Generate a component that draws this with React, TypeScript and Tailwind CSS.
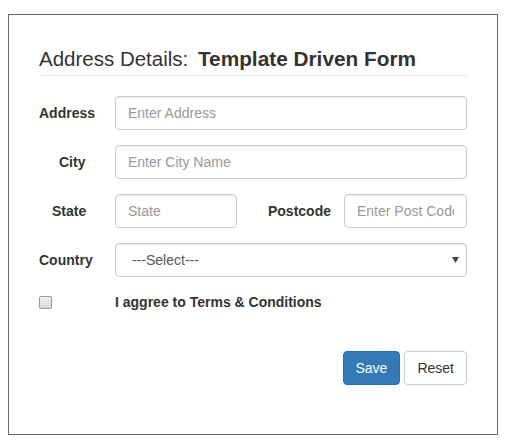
import React from "react";

const inputCls =
  "h-[34px] rounded-[4px] border border-[#cccccc] bg-white px-[12px] text-[14px] text-[#555555] outline-none placeholder:text-[#999999] shadow-[inset_0_1px_1px_rgba(0,0,0,0.075)]";

const App = () => {
  return (
    <div
      className="bg-white min-h-[448px] pl-[8px] pt-[14px]"
      style={{ fontFamily: '"Liberation Sans", Arial, sans-serif' }}
    >
      <div className="w-[490px] h-[421px] border border-[#666666] px-[30px] pt-[33px] text-[#333333]">
        {/* Heading */}
        <h3 className="text-[20.5px] leading-[22px] pb-[5px] border-b border-[#e5e5e5]">
          Address Details: <b className="ml-[4px] font-bold text-[20.8px]">Template Driven Form</b>
        </h3>

        <div className="mt-[20px] flex flex-col gap-[15px]">
          {/* Address */}
          <div className="flex items-center">
            <label className="w-[76px] text-[14px] font-bold">Address</label>
            <input className={`${inputCls} flex-1`} placeholder="Enter Address" />
          </div>

          {/* City */}
          <div className="flex items-center">
            <label className="w-[76px] pl-[20px] text-[14px] font-bold">City</label>
            <input className={`${inputCls} flex-1`} placeholder="Enter City Name" />
          </div>

          {/* State / Postcode */}
          <div className="flex items-center">
            <label className="w-[76px] pl-[13px] text-[14px] font-bold">State</label>
            <input className={`${inputCls} w-[122px]`} placeholder="State" />
            <label className="w-[107px] pr-[13px] text-right text-[14px] font-bold">Postcode</label>
            <input className={`${inputCls} w-[123px]`} placeholder="Enter Post Code" />
          </div>

          {/* Country */}
          <div className="flex items-center">
            <label className="w-[76px] text-[14px] font-bold">Country</label>
            <div className="flex-1 h-[34px] rounded-[4px] border border-[#cccccc] bg-white pl-[16px] pr-[7px] flex items-center justify-between text-[14px] text-[#555555] shadow-[inset_0_1px_1px_rgba(0,0,0,0.075)]">
              <span>---Select---</span>
              <svg width="7" height="6" viewBox="0 0 7 6">
                <path d="M0 0 H7 L3.5 6 Z" fill="#444444" />
              </svg>
            </div>
          </div>

          {/* Terms */}
          <div className="flex items-center h-[20px]">
            <div className="w-[76px] flex items-center">
              <span className="block w-[13px] h-[13px] rounded-[2px] border border-[#9a9a9a] bg-gradient-to-b from-[#f0f0f0] to-[#d8d8d8]" />
            </div>
            <span className="text-[14px] font-bold leading-[20px]">I aggree to Terms &amp; Conditions</span>
          </div>
        </div>

        {/* Buttons */}
        <div className="mt-[39px] flex justify-end gap-[4px]">
          <button className="h-[34px] px-[12px] rounded-[4px] border border-[#2e6da4] bg-[#337ab7] text-white text-[14px]">
            Save
          </button>
          <button className="h-[34px] px-[12px] rounded-[4px] border border-[#cccccc] bg-white text-[#333333] text-[14px]">
            Reset
          </button>
        </div>
      </div>
    </div>
  );
};

export default App;
